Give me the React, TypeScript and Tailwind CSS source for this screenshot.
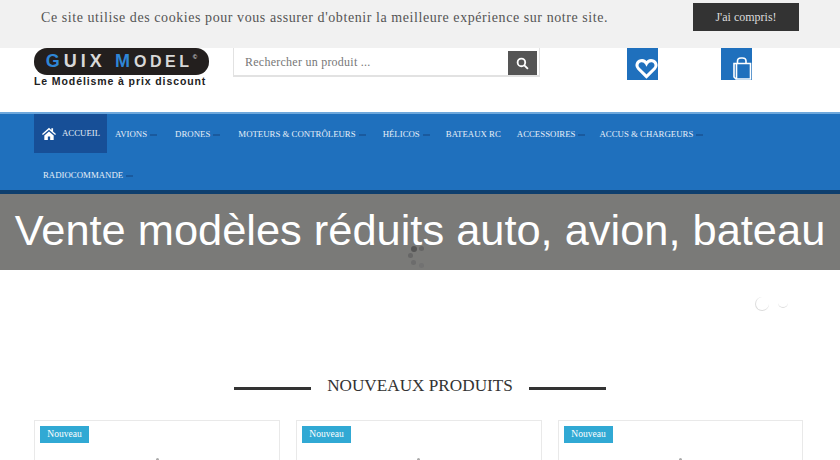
import React from "react";

const serif = { fontFamily: '"Liberation Serif", serif' };
const sans = { fontFamily: '"Liberation Sans", sans-serif' };

function Caret() {
  return <span className="ml-[3px] inline-block w-[7px] h-[2px] bg-[#1a5a9e] self-center mt-[1px]" />;
}

function NavItem({ label, caret = true, className = "" }: { label: string; caret?: boolean; className?: string }) {
  return (
    <div className={`flex items-center h-[41px] text-[8.8px] text-[#e6eff8] whitespace-nowrap ${className}`}>
      <span>{label}</span>
      {caret && <Caret />}
    </div>
  );
}

function Card({ className = "", dot }: { className?: string; dot: string }) {
  return (
    <div className={`relative h-[60px] border border-[#e9e9e9] bg-white p-[5px] ${className}`}>
      <div className="w-[49px] h-[17px] bg-[#31a9d4] text-white text-[9.5px] leading-[17px] text-center">Nouveau</div>
      <span className={`absolute top-[37px] w-[3px] h-[3px] rounded-full bg-[#aaa] ${dot}`} />
    </div>
  );
}

export default function App() {
  return (
    <div className="relative w-[840px] h-[460px] overflow-hidden bg-white" style={serif}>
      {/* Cookie bar */}
      <div className="h-[48px] bg-[#f1f1f1] flex items-start pl-[41px]">
        <p className="mt-[9px] text-[14px] leading-[18px] text-[#555] tracking-[0.57px] whitespace-nowrap w-[652px]">
          Ce site utilise des cookies pour vous assurer d'obtenir la meilleure expérience sur notre site.
        </p>
        <button className="mt-[3px] w-[106px] h-[28px] bg-[#333] text-[#ddd] text-[12px]">J'ai compris!</button>
      </div>

      {/* Header */}
      <div className="h-[64px] flex items-start pl-[34px]">
        <div className="w-[175px]">
          <div className="h-[27px] rounded-[13px] bg-[#231f1e] flex items-center justify-center font-bold text-[18px] tracking-[4px] text-[#d8d8d8] whitespace-nowrap" style={sans}>
            <span className="text-[#2f86d6]">G</span>UIX&nbsp;<span className="text-[#2f86d6]">M</span>
            <span className="text-[16px] tracking-[3.6px]">ODEL</span>
            <span className="text-[6px] -mt-[8px] tracking-normal">©</span>
          </div>
          <div className="mt-[1px] text-[10.5px] leading-[11px] font-bold text-[#222] tracking-[0.9px] whitespace-nowrap" style={sans}>
            Le Modélisme à prix discount
          </div>
        </div>
        <div className="ml-[24px] w-[307px] h-[29px] border border-t-0 border-[#e2e2e2] border-b-2 flex items-end pl-[11px] pr-[2px]">
          <span className="flex-1 self-center text-[12px] text-[#777] tracking-[0.25px]">Rechercher un produit ...</span>
          <div className="w-[29px] h-[24px] bg-[#555] flex items-center justify-center">
            <svg width="13" height="13" viewBox="0 0 24 24" fill="none" stroke="white" strokeWidth="3.4">
              <circle cx="10" cy="10" r="7" />
              <path d="M15 15l7 7" />
            </svg>
          </div>
        </div>
        <div className="ml-[87px] w-[31px] h-[32px] bg-[#1f70bd] flex items-end justify-end pb-[1px]">
          <svg width="23" height="21" viewBox="0 0 24 21" fill="none" stroke="white" strokeWidth="3.2">
            <path d="M12 19L3.500 10.500C1 8 1.800 3.200 6 2.400c2.600-.5 4.800.8 6 3 1.200-2.200 3.400-3.500 6-3 4.200.8 5 5.600 2.500 8.100z" />
          </svg>
        </div>
        <div className="ml-[63px] w-[31px] h-[32px] bg-[#1f70bd] flex items-end justify-end">
          <svg width="21" height="23" viewBox="0 0 21 23" fill="none" stroke="white" strokeWidth="1.6">
            <path d="M6.500 7V4C6.500 2 8 1 10 1h1.500c2 0 3.500 1 3.500 3v3" />
            <path d="M3 6.500h16.500V22H5l-2-2z" />
            <path d="M5.500 7v15" />
          </svg>
        </div>
      </div>

      {/* Nav */}
      <div className="h-[82px] bg-[#1f70bd] border-t-2 border-t-[#6ea8dc] border-b-4 border-b-[#0e3f6e] pl-[34px] uppercase">
        <div className="flex items-start">
          <div className="w-[73px] h-[39px] bg-[#174f97] flex items-center pl-[8px] text-[8.8px] text-[#e6eff8]">
            <svg width="14" height="13" viewBox="0 0 24 22" fill="white">
              <path d="M12 1L0 12l1.500 1.500L12 4.500l10.500 9L24 12l-5-4.500V2h-3v3z" />
              <path d="M4 14.500L12 7.500l8 7V22h-6v-6h-4v6H4z" />
            </svg>
            <span className="ml-[6px]">Accueil</span>
          </div>
          <NavItem label="Avions" className="ml-[8px] h-[39px]" />
          <NavItem label="Drones" className="ml-[18px] h-[39px]" />
          <NavItem label="Moteurs & contrôleurs" className="ml-[18px] h-[39px]" />
          <NavItem label="Hélicos" className="ml-[17px] h-[39px]" />
          <NavItem label="Bateaux RC" caret={false} className="ml-[16px] h-[39px]" />
          <NavItem label="Accessoires" className="ml-[16px] h-[39px]" />
          <NavItem label="Accus & chargeurs" className="ml-[14px] h-[39px]" />
        </div>
        <NavItem label="Radiocommande" className="ml-[9px]" />
      </div>

      {/* Title banner */}
      <div className="relative h-[76px] bg-[#7a7a78] flex items-center justify-center">
        <h1 className="text-[43.400px] leading-[70px] -mt-[4px] text-white whitespace-nowrap" style={sans}>
          Vente modèles réduits auto, avion, bateau
        </h1>
        <span className="absolute left-[411px] top-[52px] w-[6px] h-[6px] rounded-full bg-[#555]" />
        <span className="absolute left-[419px] top-[52px] w-[5px] h-[5px] rounded-full bg-[#666]" />
        <span className="absolute left-[408px] top-[59px] w-[5px] h-[5px] rounded-full bg-[#666]" />
        <span className="absolute left-[411px] top-[66px] w-[5px] h-[5px] rounded-full bg-[#6c6c6c]" />
        <span className="absolute left-[419px] top-[69px] w-[5px] h-[5px] rounded-full bg-[#727272]" />
      </div>

      {/* Slider remainder */}
      <div className="relative h-[95px]">
        <span className="absolute left-[755px] top-[27px] w-[14px] h-[14px] rounded-full border-b border-l border-[#ddd]" />
        <span className="absolute left-[778px] top-[28px] w-[10px] h-[10px] rounded-full border-b border-[#ddd]" />
      </div>

      {/* Section title */}
      <div className="flex items-center justify-center h-[40px]">
        <span className="w-[77px] h-[3px] bg-[#333] mt-[6px]" />
        <h2 className="mx-[16px] mt-[1px] text-[17.200px] leading-[40px] text-[#333] whitespace-nowrap">NOUVEAUX PRODUITS</h2>
        <span className="w-[77px] h-[3px] bg-[#333] mt-[6px]" />
      </div>

      {/* Cards */}
      <div className="flex pl-[34px] mt-[15px] gap-[16px]">
        <Card className="w-[246px]" dot="left-[121px]" />
        <Card className="w-[246px]" dot="left-[120px]" />
        <Card className="w-[245px]" dot="left-[120px]" />
      </div>
    </div>
  );
}
